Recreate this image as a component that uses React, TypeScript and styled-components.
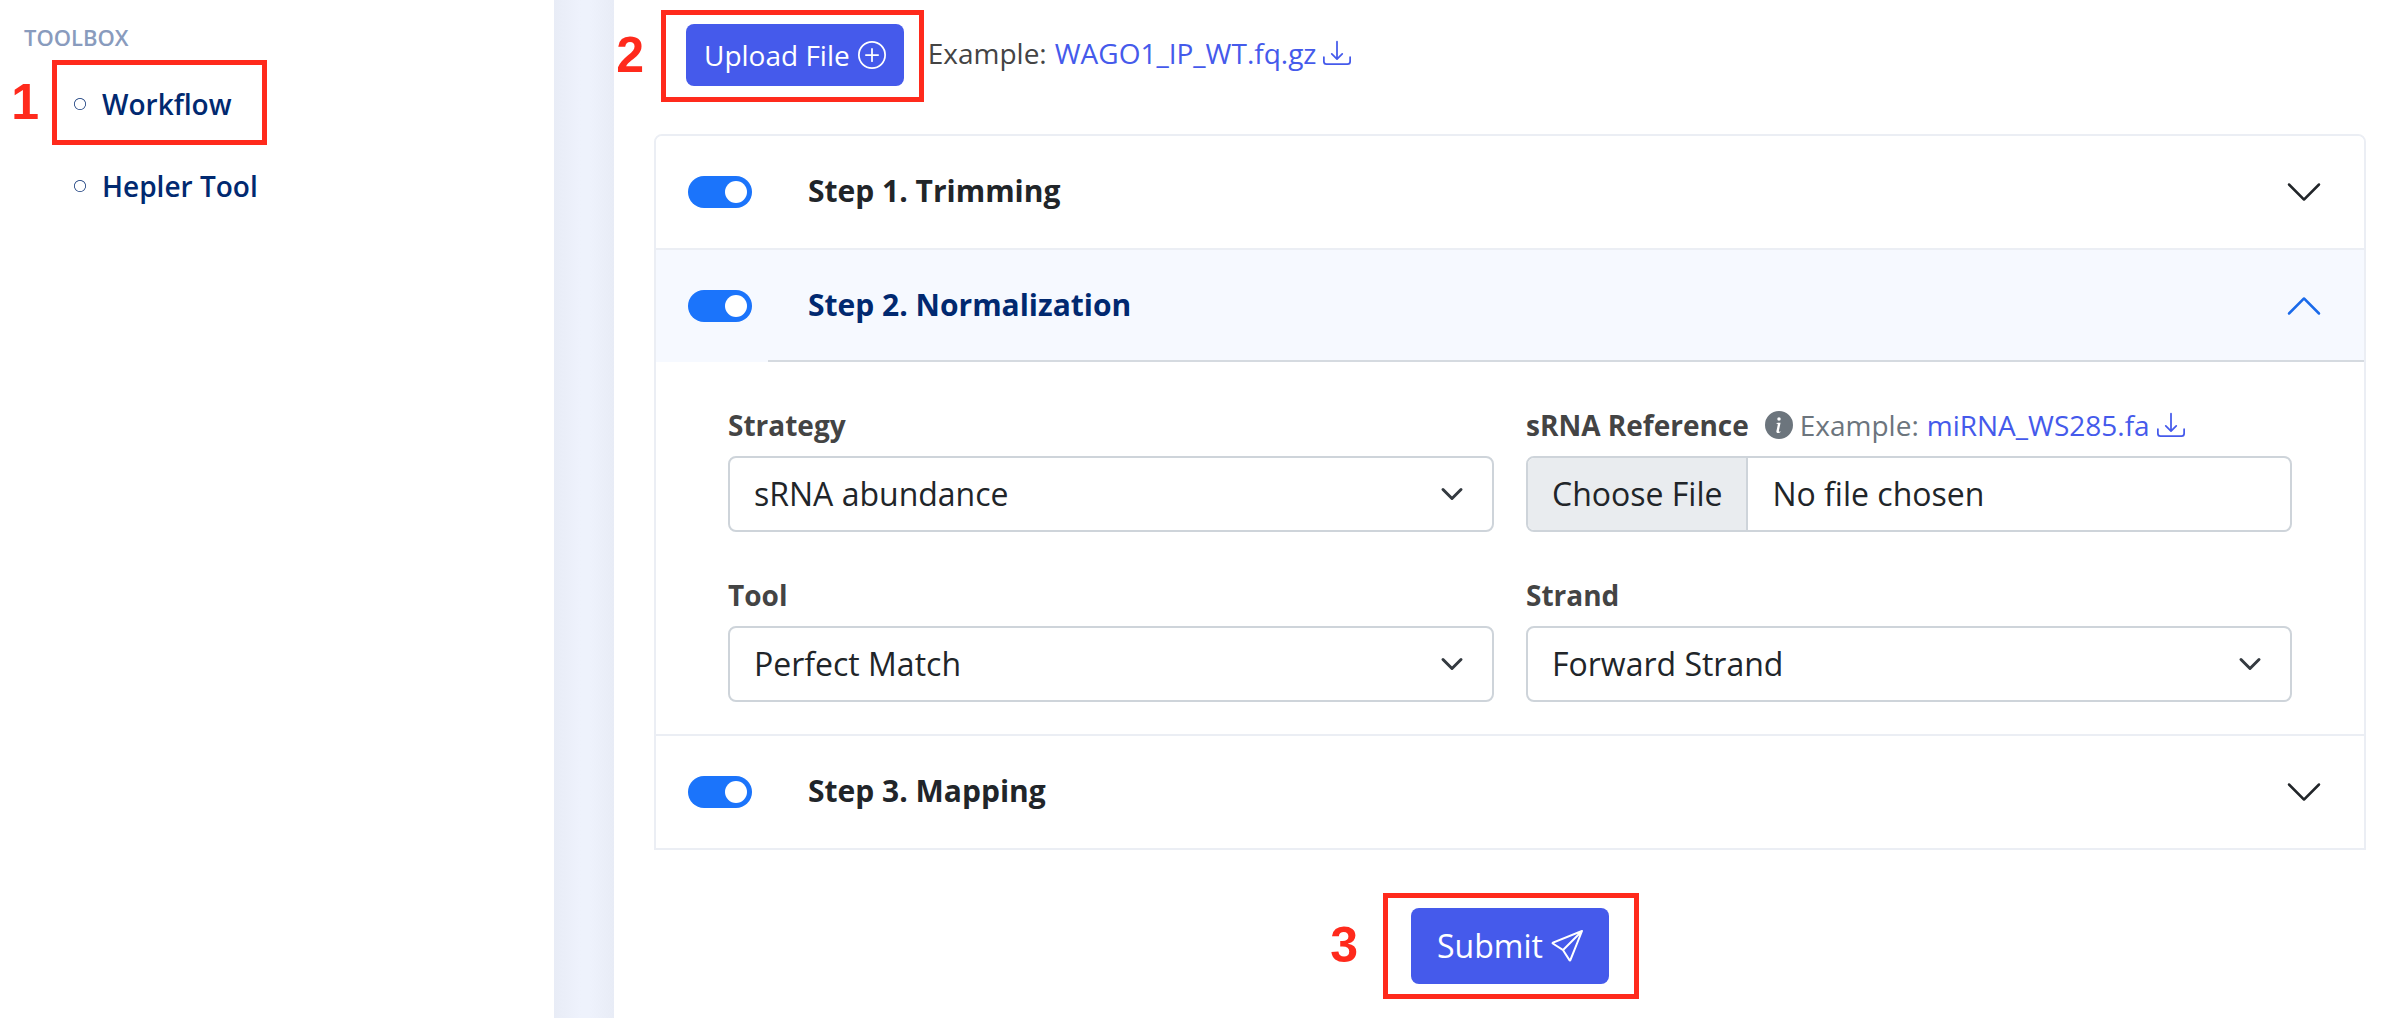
import { useState } from "react";
import type { ReactNode } from "react";
import styled, { createGlobalStyle, css } from "styled-components";
import {
  BsChevronDown,
  BsCircle,
  BsDownload,
  BsInfoCircleFill,
  BsPlusCircle,
  BsSend,
} from "react-icons/bs";

const color = {
  primary: "#455aeb",
  switchOn: "#1b74fb",
  navy: "#012970",
  heading: "#899bbd",
  body: "#444444",
  ink: "#212529",
  muted: "#6c757d",
  line: "#ebeef4",
  fieldLine: "#ced4da",
  highlight: "#ff2a1c",
};

const GlobalStyle = createGlobalStyle`
  *, *::before, *::after { box-sizing: border-box; }
  body {
    margin: 0;
    background: #ffffff;
    color: ${color.body};
    font-family: "Open Sans", "Noto Sans", sans-serif;
    font-size: 28px;
    line-height: 42px;
  }
  svg { display: block; flex: none; }
`;

const Page = styled.div`
  display: grid;
  grid-template-columns: 554px 60px minmax(0, 1fr);
  min-height: 100vh;
`;

const Sidebar = styled.nav`
  padding: 16px 24px;
`;

const Gutter = styled.div`
  background: linear-gradient(90deg, #e8ecf6, #eef2fc 45%, #eef2fc 60%, #e8ecf6);
`;

const Main = styled.main`
  padding: 24px 34px 32px 40px;
`;

const NavHeading = styled.h2`
  margin: 0;
  color: ${color.heading};
  font-size: 22px;
  font-weight: 600;
  line-height: 42px;
`;

const NavList = styled.ul`
  margin: 5px 0 0;
  padding: 0 0 0 50px;
  list-style: none;
`;

const NavItem = styled.li`
  display: flex;
  align-items: center;
  height: 82px;
`;

const NavLink = styled.a`
  display: flex;
  align-items: center;
  gap: 16px;
  color: ${color.navy};
  font-weight: 600;
  text-decoration: none;
`;

const Marked = styled.div`
  position: relative;
  display: flex;
`;

const Frame = styled.span<{ $inset: string }>`
  position: absolute;
  inset: ${(p) => p.$inset};
  border: 5px solid ${color.highlight};
  pointer-events: none;
`;

const StepNumber = styled.span<{ $gap: number }>`
  position: absolute;
  right: 100%;
  top: 50%;
  margin: -28px ${(p) => p.$gap}px 0 0;
  color: ${color.highlight};
  font: bold 50px/54px "Liberation Sans", Arial, sans-serif;
`;

const UploadRow = styled.div`
  display: flex;
  align-items: center;
  gap: 24px;
  padding-left: 32px;
`;

const Button = styled.button<{ $large?: boolean }>`
  display: flex;
  align-items: center;
  gap: 8px;
  border: 0;
  border-radius: 8px;
  background: ${color.primary};
  color: #ffffff;
  font-family: inherit;
  cursor: pointer;
  ${(p) =>
    p.$large
      ? css`
          padding: 14px 26px;
          font-size: 32px;
          line-height: 48px;
        `
      : css`
          padding: 10px 18px;
          font-size: 28px;
          line-height: 42px;
        `}
`;

const Example = styled.p<{ $muted?: boolean }>`
  display: flex;
  align-items: center;
  gap: 8px;
  margin: 0;
  padding-bottom: ${(p) => (p.$muted ? 0 : 4)}px;
  color: ${(p) => (p.$muted ? color.muted : color.body)};
`;

const FileLink = styled.a`
  display: flex;
  align-items: center;
  gap: 7px;
  color: ${color.primary};
  text-decoration: none;
`;

const Accordion = styled.div`
  margin-top: 48px;
  border: 2px solid ${color.line};
  border-radius: 8px 8px 0 0;
  overflow: hidden;
`;

const Item = styled.section`
  & + & {
    border-top: 2px solid ${color.line};
  }
`;

const ItemHeader = styled.div<{ $open: boolean }>`
  display: grid;
  grid-template-columns: 112px 1fr;
  height: 112px;
  background: ${(p) => (p.$open ? "#f6f9ff" : "#ffffff")};
`;

const SwitchCell = styled.div`
  display: flex;
  align-items: center;
  padding-left: 32px;
`;

const Switch = styled.input`
  appearance: none;
  display: flex;
  align-items: center;
  justify-content: flex-start;
  width: 64px;
  height: 32px;
  margin: 0;
  padding: 5px;
  border-radius: 16px;
  background: #adb5bd;
  cursor: pointer;

  &::before {
    content: "";
    width: 22px;
    height: 22px;
    border-radius: 50%;
    background: #ffffff;
  }

  &:checked {
    justify-content: flex-end;
    background: ${color.switchOn};
  }
`;

const ItemTitle = styled.h3`
  display: flex;
  margin: 0;
`;

const ItemButton = styled.button<{ $open: boolean }>`
  display: flex;
  flex: 1;
  align-items: center;
  justify-content: space-between;
  padding: 0 40px;
  border: 0;
  background: transparent;
  color: ${(p) => (p.$open ? color.navy : color.ink)};
  font-family: inherit;
  font-size: 30px;
  font-weight: 700;
  text-align: left;
  cursor: pointer;
  box-shadow: ${(p) => (p.$open ? "inset 0 -2px 0 #d5dae0" : "none")};

  svg {
    color: ${(p) => (p.$open ? "#1a6aea" : color.ink)};
    transform: ${(p) => (p.$open ? "rotate(180deg)" : "none")};
  }
`;

const ItemText = styled.span`
  padding-bottom: 4px;
`;

const ItemBody = styled.div`
  display: grid;
  grid-template-columns: repeat(2, minmax(0, 1fr));
  gap: 42px 32px;
  padding: 42px 72px 32px;
`;

const Field = styled.div`
  display: flex;
  flex-direction: column;
  gap: 10px;
`;

const LabelRow = styled.div`
  display: flex;
  align-items: center;
  gap: 16px;
  height: 42px;
`;

const Label = styled.label`
  font-weight: 700;
`;

const Hint = styled.div`
  display: flex;
  align-items: center;
  gap: 7px;
  color: ${color.muted};
`;

const fieldBox = css`
  width: 100%;
  height: 76px;
  border: 2px solid ${color.fieldLine};
  border-radius: 8px;
  background: #ffffff;
  color: ${color.ink};
  font-family: inherit;
  font-size: 32px;
  line-height: 48px;
`;

const SelectWrap = styled.div`
  display: grid;
  align-items: center;

  > * {
    grid-area: 1 / 1;
  }

  svg {
    justify-self: end;
    margin-right: 30px;
    pointer-events: none;
  }
`;

const SelectBox = styled.select`
  ${fieldBox}
  appearance: none;
  padding: 12px 72px 12px 24px;
`;

const FileInput = styled.input`
  ${fieldBox}
  padding: 12px 24px;
  overflow: hidden;

  &::file-selector-button {
    margin: -12px 24px -12px -24px;
    padding: 12px 24px;
    border: 0 solid ${color.fieldLine};
    border-right-width: 2px;
    background: #e9ecef;
    color: ${color.ink};
    font: inherit;
  }
`;

const SubmitRow = styled.div`
  display: flex;
  justify-content: center;
  margin-top: 58px;
`;

function ArrowDown() {
  return (
    <svg width="24" height="24" viewBox="0 0 16 16" fill="none" aria-hidden="true">
      <path
        d="m2 5 6 6 6-6"
        stroke="#343a40"
        strokeWidth="2"
        strokeLinecap="round"
        strokeLinejoin="round"
      />
    </svg>
  );
}

function Select({ id, label, options }: { id: string; label: string; options: string[] }) {
  return (
    <Field>
      <LabelRow>
        <Label htmlFor={id}>{label}</Label>
      </LabelRow>
      <SelectWrap>
        <SelectBox id={id}>
          {options.map((option) => (
            <option key={option}>{option}</option>
          ))}
        </SelectBox>
        <ArrowDown />
      </SelectWrap>
    </Field>
  );
}

function Step({
  title,
  defaultOpen = false,
  children,
}: {
  title: string;
  defaultOpen?: boolean;
  children?: ReactNode;
}) {
  const [open, setOpen] = useState(defaultOpen);
  return (
    <Item>
      <ItemHeader $open={open}>
        <SwitchCell>
          <Switch type="checkbox" role="switch" defaultChecked aria-label={title} />
        </SwitchCell>
        <ItemTitle>
          <ItemButton $open={open} aria-expanded={open} onClick={() => setOpen(!open)}>
            <ItemText>{title}</ItemText>
            <BsChevronDown size={40} />
          </ItemButton>
        </ItemTitle>
      </ItemHeader>
      {open && children}
    </Item>
  );
}

export default function App() {
  return (
    <>
      <GlobalStyle />
      <Page>
        <Sidebar>
          <NavHeading>TOOLBOX</NavHeading>
          <NavList>
            <NavItem>
              <Marked>
                <NavLink href="#workflow">
                  <BsCircle size={12} />
                  Workflow
                </NavLink>
                <Frame $inset="-23px -35px -20px -22px">
                  <StepNumber $gap={18}>1</StepNumber>
                </Frame>
              </Marked>
            </NavItem>
            <NavItem>
              <NavLink href="#helper-tool">
                <BsCircle size={12} />
                Hepler Tool
              </NavLink>
            </NavItem>
          </NavList>
        </Sidebar>
        <Gutter />
        <Main>
          <UploadRow>
            <Marked>
              <Button type="button">
                Upload File
                <BsPlusCircle size={28} />
              </Button>
              <Frame $inset="-14px -20px -16px -25px">
                <StepNumber $gap={22}>2</StepNumber>
              </Frame>
            </Marked>
            <Example>
              Example:
              <FileLink href="#wago1">
                WAGO1_IP_WT.fq.gz
                <BsDownload size={28} />
              </FileLink>
            </Example>
          </UploadRow>

          <Accordion>
            <Step title="Step 1. Trimming" />
            <Step title="Step 2. Normalization" defaultOpen>
              <ItemBody>
                <Select
                  id="strategy"
                  label="Strategy"
                  options={["sRNA abundance"]}
                />
                <Field>
                  <LabelRow>
                    <Label htmlFor="reference">sRNA Reference</Label>
                    <Hint>
                      <BsInfoCircleFill size={28} />
                      <Example $muted>
                        Example:
                        <FileLink href="#mirna">
                          miRNA_WS285.fa
                          <BsDownload size={28} />
                        </FileLink>
                      </Example>
                    </Hint>
                  </LabelRow>
                  <FileInput id="reference" type="file" />
                </Field>
                <Select id="tool" label="Tool" options={["Perfect Match"]} />
                <Select id="strand" label="Strand" options={["Forward Strand"]} />
              </ItemBody>
            </Step>
            <Step title="Step 3. Mapping" />
          </Accordion>

          <SubmitRow>
            <Marked>
              <Button type="submit" $large>
                Submit
                <BsSend size={32} />
              </Button>
              <Frame $inset="-15px -30px -15px -28px">
                <StepNumber $gap={30}>3</StepNumber>
              </Frame>
            </Marked>
          </SubmitRow>
        </Main>
      </Page>
    </>
  );
}
